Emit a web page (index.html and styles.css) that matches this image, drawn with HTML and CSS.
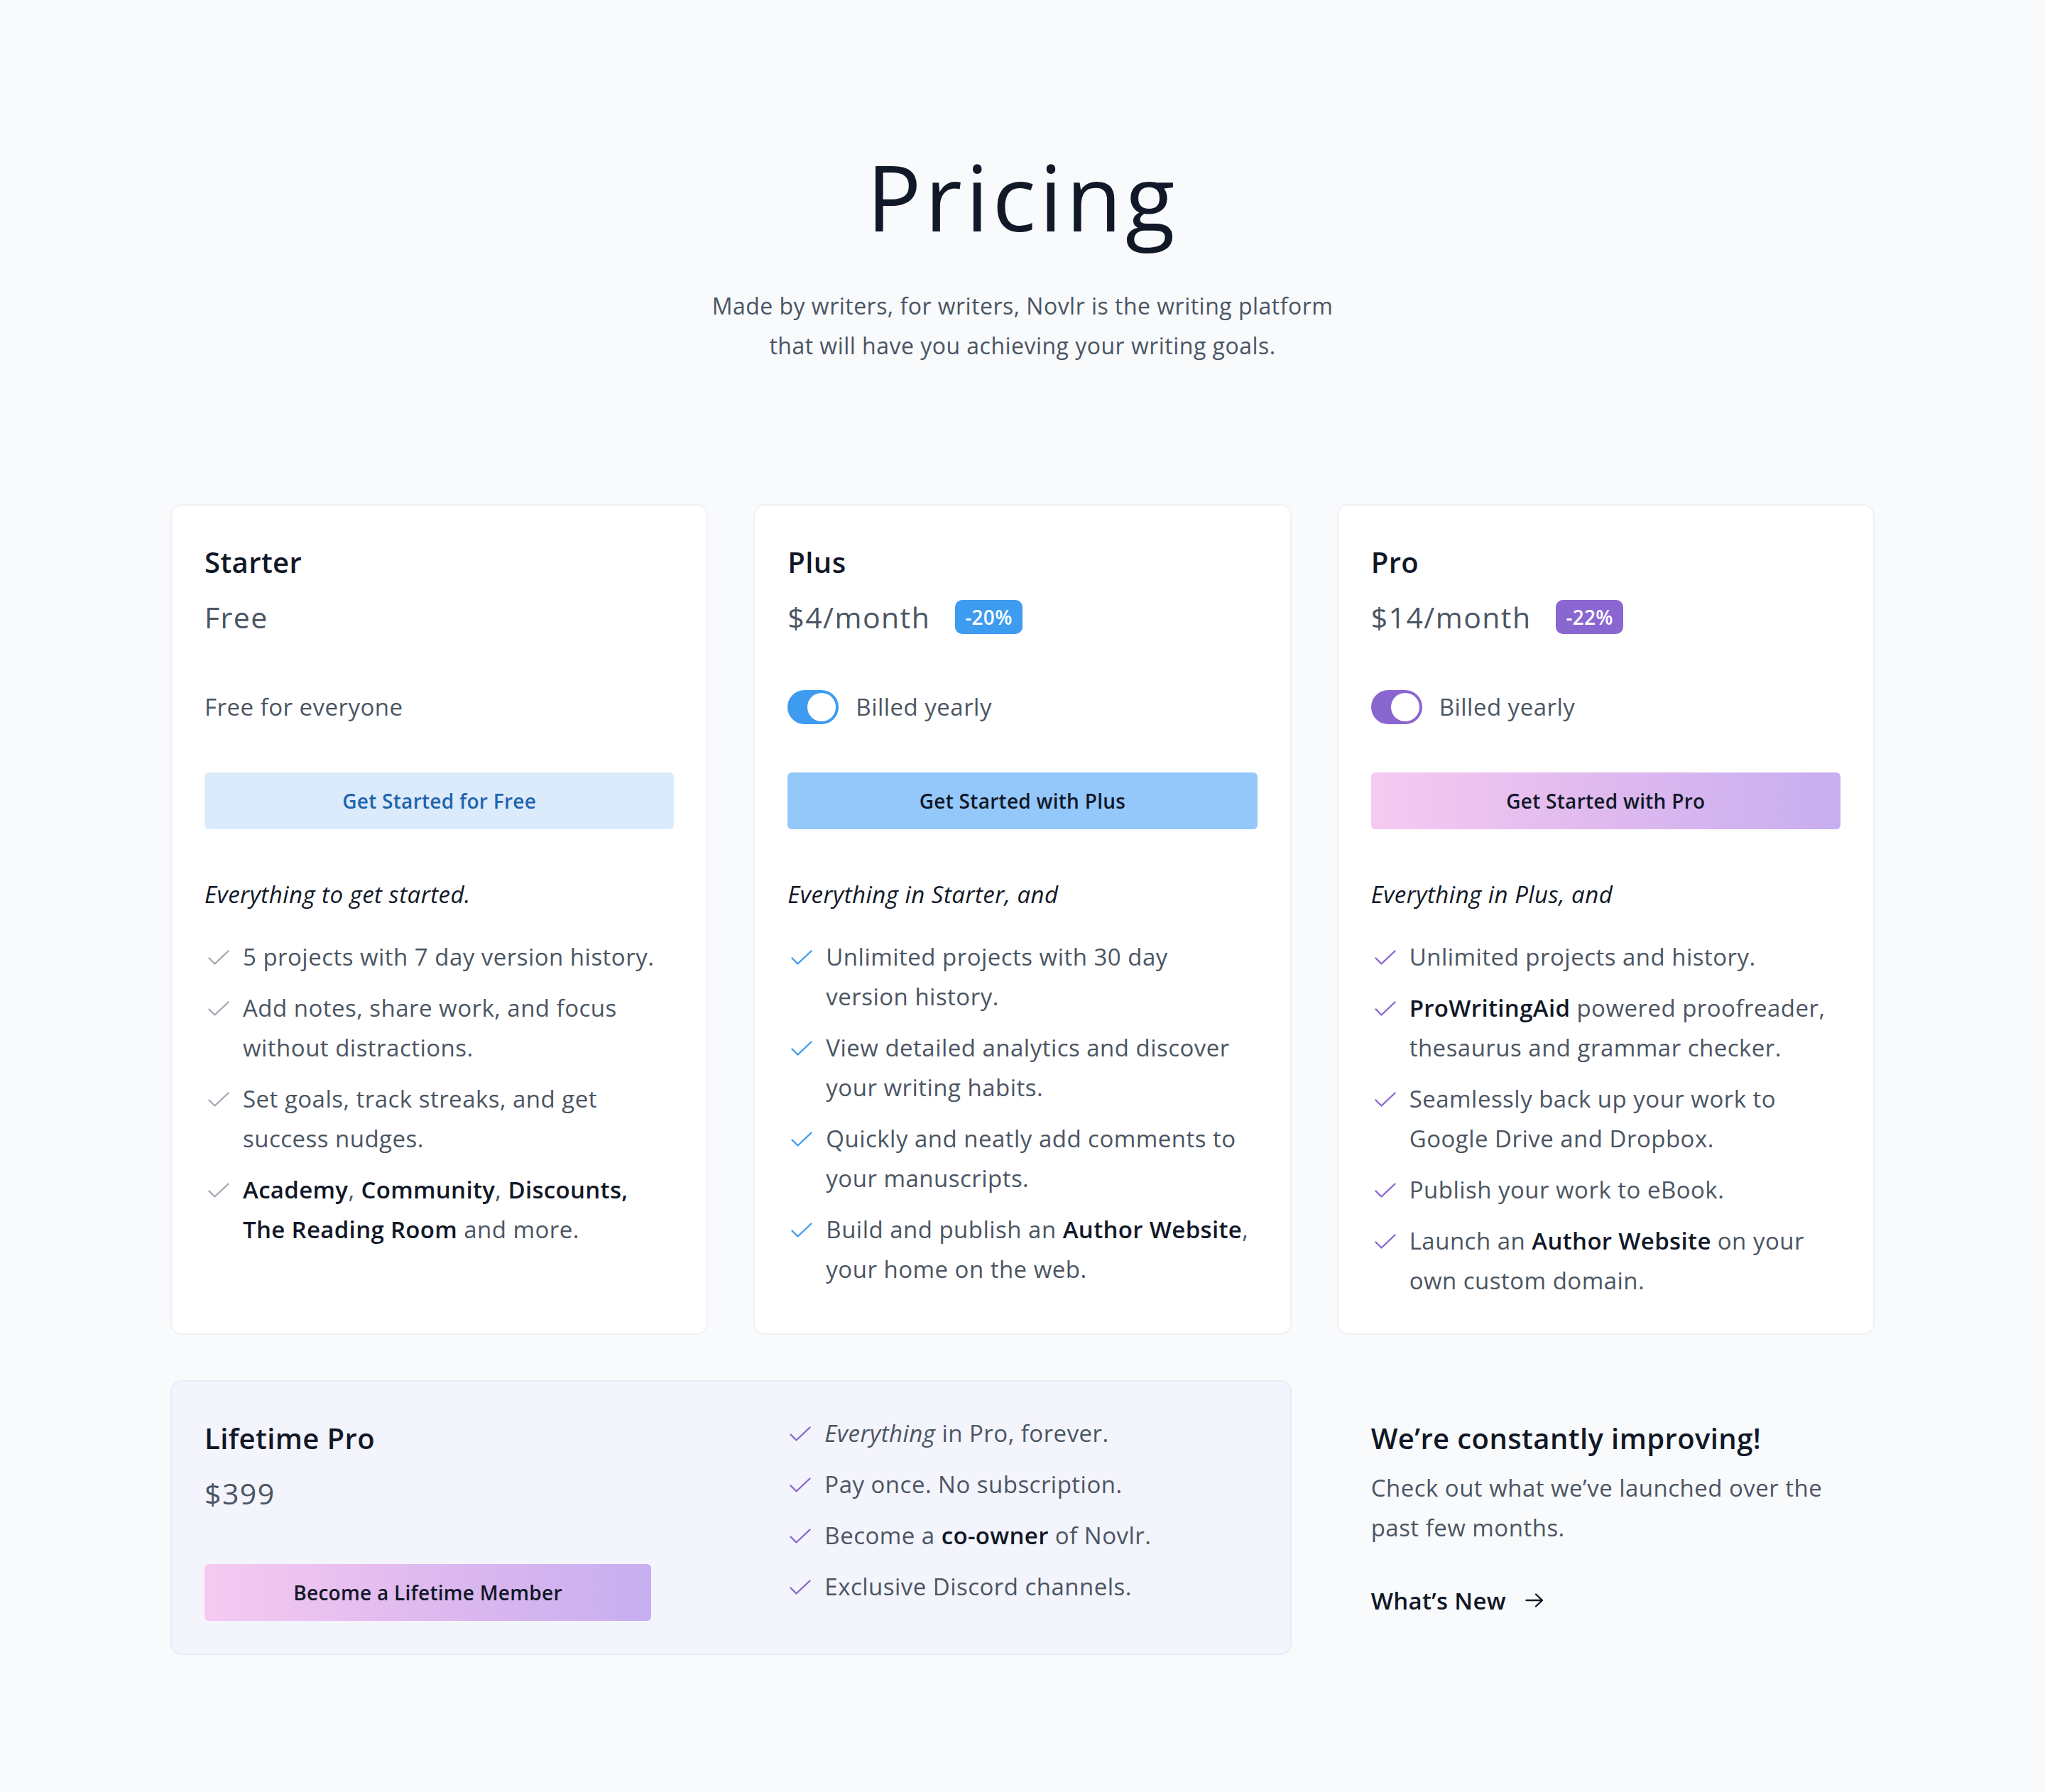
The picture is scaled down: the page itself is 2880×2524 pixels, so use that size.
FILE: index.html
```html
<!DOCTYPE html>
<html lang="en">
<head>
<meta charset="utf-8">
<title>Pricing</title>
<link rel="stylesheet" href="styles.css">
</head>
<body>
<main class="page">
  <header class="hero">
    <h1 class="hero-title">Pricing</h1>
    <p class="hero-sub">Made by writers, for writers, Novlr is the writing platform<br>that will have you achieving your writing goals.</p>
  </header>

  <section class="plans">
    <article class="card">
      <h2 class="plan-name">Starter</h2>
      <p class="plan-price">Free</p>
      <div class="plan-billing"><span>Free for everyone</span></div>
      <a class="btn btn-starter" href="#">Get Started for Free</a>
      <p class="features-title">Everything to get started.</p>
      <ul class="features features-gray">
        <li><svg class="check" viewBox="0 0 30 22"><path d="M1.5 11.5 L9.5 19.5 L28.5 1.5"/></svg><span>5 projects with 7 day version history.</span></li>
        <li><svg class="check" viewBox="0 0 30 22"><path d="M1.5 11.5 L9.5 19.5 L28.5 1.5"/></svg><span>Add notes, share work, and focus<br>without distractions.</span></li>
        <li><svg class="check" viewBox="0 0 30 22"><path d="M1.5 11.5 L9.5 19.5 L28.5 1.5"/></svg><span>Set goals, track streaks, and get<br>success nudges.</span></li>
        <li><svg class="check" viewBox="0 0 30 22"><path d="M1.5 11.5 L9.5 19.5 L28.5 1.5"/></svg><span><strong>Academy</strong>, <strong>Community</strong>, <strong>Discounts,</strong><br><strong>The Reading Room</strong> and more.</span></li>
      </ul>
    </article>

    <article class="card">
      <h2 class="plan-name">Plus</h2>
      <p class="plan-price"><span>$4/month</span><span class="badge badge-blue">-20%</span></p>
      <div class="plan-billing"><span class="toggle toggle-blue"></span><span>Billed yearly</span></div>
      <a class="btn btn-plus" href="#">Get Started with Plus</a>
      <p class="features-title">Everything in Starter, and</p>
      <ul class="features features-blue">
        <li><svg class="check" viewBox="0 0 30 22"><path d="M1.5 11.5 L9.5 19.5 L28.5 1.5"/></svg><span>Unlimited projects with 30 day<br>version history.</span></li>
        <li><svg class="check" viewBox="0 0 30 22"><path d="M1.5 11.5 L9.5 19.5 L28.5 1.5"/></svg><span>View detailed analytics and discover<br>your writing habits.</span></li>
        <li><svg class="check" viewBox="0 0 30 22"><path d="M1.5 11.5 L9.5 19.5 L28.5 1.5"/></svg><span>Quickly and neatly add comments to<br>your manuscripts.</span></li>
        <li><svg class="check" viewBox="0 0 30 22"><path d="M1.5 11.5 L9.5 19.5 L28.5 1.5"/></svg><span>Build and publish an <strong>Author Website</strong>,<br>your home on the web.</span></li>
      </ul>
    </article>

    <article class="card">
      <h2 class="plan-name">Pro</h2>
      <p class="plan-price"><span>$14/month</span><span class="badge badge-purple">-22%</span></p>
      <div class="plan-billing"><span class="toggle toggle-purple"></span><span>Billed yearly</span></div>
      <a class="btn btn-pro" href="#">Get Started with Pro</a>
      <p class="features-title">Everything in Plus, and</p>
      <ul class="features features-purple">
        <li><svg class="check" viewBox="0 0 30 22"><path d="M1.5 11.5 L9.5 19.5 L28.5 1.5"/></svg><span>Unlimited projects and history.</span></li>
        <li><svg class="check" viewBox="0 0 30 22"><path d="M1.5 11.5 L9.5 19.5 L28.5 1.5"/></svg><span><strong>ProWritingAid</strong> powered proofreader,<br>thesaurus and grammar checker.</span></li>
        <li><svg class="check" viewBox="0 0 30 22"><path d="M1.5 11.5 L9.5 19.5 L28.5 1.5"/></svg><span>Seamlessly back up your work to<br>Google Drive and Dropbox.</span></li>
        <li><svg class="check" viewBox="0 0 30 22"><path d="M1.5 11.5 L9.5 19.5 L28.5 1.5"/></svg><span>Publish your work to eBook.</span></li>
        <li><svg class="check" viewBox="0 0 30 22"><path d="M1.5 11.5 L9.5 19.5 L28.5 1.5"/></svg><span>Launch an <strong>Author Website</strong> on your<br>own custom domain.</span></li>
      </ul>
    </article>

    <article class="lifetime">
      <div class="lifetime-main">
        <h2 class="plan-name">Lifetime Pro</h2>
        <p class="plan-price">$399</p>
        <a class="btn btn-pro btn-lifetime" href="#">Become a Lifetime Member</a>
      </div>
      <ul class="features features-purple lifetime-list">
        <li><svg class="check" viewBox="0 0 30 22"><path d="M1.5 11.5 L9.5 19.5 L28.5 1.5"/></svg><span><em>Everything</em> in Pro, forever.</span></li>
        <li><svg class="check" viewBox="0 0 30 22"><path d="M1.5 11.5 L9.5 19.5 L28.5 1.5"/></svg><span>Pay once. No subscription.</span></li>
        <li><svg class="check" viewBox="0 0 30 22"><path d="M1.5 11.5 L9.5 19.5 L28.5 1.5"/></svg><span>Become a <strong>co-owner</strong> of Novlr.</span></li>
        <li><svg class="check" viewBox="0 0 30 22"><path d="M1.5 11.5 L9.5 19.5 L28.5 1.5"/></svg><span>Exclusive Discord channels.</span></li>
      </ul>
    </article>

    <aside class="news">
      <h2 class="plan-name">We’re constantly improving!</h2>
      <p class="news-text">Check out what we’ve launched over the<br>past few months.</p>
      <a class="news-link" href="#">What’s New<svg class="arrow" viewBox="0 0 26 22"><path d="M1.5 11 H24 M15 2.5 L24 11 L15 19.5"/></svg></a>
    </aside>
  </section>
</main>
</body>
</html>
```

FILE: styles.css
```css
html {
  background: #f8fafc;
}

body {
  margin: 0;
  background: #f8fafc;
  font-family: "Open Sans", "Noto Sans", sans-serif;
  color: #4b5563;
  letter-spacing: 0.03em;
}

.page {
  width: 2400px;
  margin: 0 auto;
  padding: 213px 0 190px;
}

.hero {
  text-align: center;
}

.hero-title {
  margin: 0;
  font-size: 128px;
  line-height: 128px;
  font-weight: 400;
  color: #111827;
  letter-spacing: 0.04em;
}

.hero-sub {
  margin: 62px 0 0;
  font-size: 32px;
  line-height: 56px;
  color: #4b5563;
}

.plans {
  margin-top: 195px;
  display: grid;
  grid-template-columns: repeat(3, 1fr);
  gap: 64px;
}

.card {
  background: #ffffff;
  border: 2px solid #eef1f5;
  border-radius: 16px;
  padding: 52px 46px 46px;
  display: flex;
  flex-direction: column;
}

.plan-name {
  margin: 0;
  font-size: 40px;
  line-height: 56px;
  font-weight: 600;
  color: #111827;
  letter-spacing: 0.01em;
}

.plan-price {
  margin: 21px 0 0;
  font-size: 41px;
  line-height: 56px;
  color: #4b5563;
  letter-spacing: 0.035em;
  display: flex;
  align-items: center;
  gap: 35px;
}

.badge {
  height: 48px;
  padding: 0 14px;
  border-radius: 10px;
  font-size: 28px;
  line-height: 48px;
  font-weight: 600;
  color: #ffffff;
  letter-spacing: 0.01em;
}

.badge-blue {
  background: #3d9bf0;
}

.badge-purple {
  background: #8a66d0;
}

.plan-billing {
  margin-top: 71px;
  height: 56px;
  display: flex;
  align-items: center;
  gap: 24px;
  font-size: 33px;
  line-height: 56px;
  color: #4b5563;
}

.toggle {
  position: relative;
  flex: none;
  width: 72px;
  height: 48px;
  border-radius: 24px;
}

.toggle::after {
  content: "";
  position: absolute;
  top: 4px;
  right: 4px;
  width: 40px;
  height: 40px;
  border-radius: 50%;
  background: #ffffff;
}

.toggle-blue {
  background: #3d9bf0;
}

.toggle-purple {
  background: #8a66d0;
}

.btn {
  margin-top: 64px;
  height: 80px;
  display: flex;
  align-items: center;
  justify-content: center;
  border-radius: 6px;
  font-size: 28px;
  font-weight: 600;
  letter-spacing: 0.01em;
  text-decoration: none;
  color: #111827;
}

.btn-starter {
  background: #dcebfc;
  color: #1f64ac;
}

.btn-plus {
  background: #94c8fb;
}

.btn-pro {
  background: linear-gradient(90deg, #f6caf1 0%, #dfb9ef 50%, #c7aef0 100%);
}

.features-title {
  margin: 64px 0 0;
  font-size: 33px;
  line-height: 56px;
  font-style: italic;
  color: #111827;
}

.features {
  list-style: none;
  margin: 32px 0 0;
  padding: 0;
  display: flex;
  flex-direction: column;
  gap: 16px;
}

.features li {
  display: flex;
  align-items: flex-start;
  gap: 19px;
  font-size: 33px;
  line-height: 56px;
  color: #4b5563;
}

.features strong {
  font-weight: 600;
  color: #111827;
  letter-spacing: 0.01em;
}

.features em {
  font-style: italic;
}

.check {
  flex: none;
  width: 30px;
  height: 22px;
  margin: 18px 0 0 5px;
  fill: none;
  stroke-width: 2.4;
  stroke-linecap: round;
  stroke-linejoin: round;
}

.features-gray .check {
  stroke: #a3a9b3;
}

.features-blue .check {
  stroke: #3d9bf0;
}

.features-purple .check {
  stroke: #8a66d0;
}

.lifetime {
  grid-column: span 2;
  display: grid;
  grid-template-columns: 1fr 1fr;
  column-gap: 64px;
  background: #f3f4fc;
  border: 2px solid #eaecf5;
  border-radius: 16px;
}

.lifetime-main {
  padding: 52px 46px 46px;
  display: flex;
  flex-direction: column;
}

.btn-lifetime {
  width: 629px;
  margin-top: 72px;
}

.lifetime-list {
  margin: 0;
  padding: 45px 46px 46px;
}

.news {
  padding: 54px 48px 48px;
}

.news-text {
  margin: 14px 0 0;
  font-size: 33px;
  line-height: 56px;
  color: #4b5563;
}

.news-link {
  margin-top: 46px;
  display: flex;
  align-items: center;
  gap: 27px;
  height: 56px;
  font-size: 33px;
  font-weight: 600;
  letter-spacing: 0.01em;
  color: #111827;
  text-decoration: none;
}

.arrow {
  width: 26px;
  height: 22px;
  fill: none;
  stroke: #111827;
  stroke-width: 2.4;
  stroke-linecap: round;
  stroke-linejoin: round;
}
```
